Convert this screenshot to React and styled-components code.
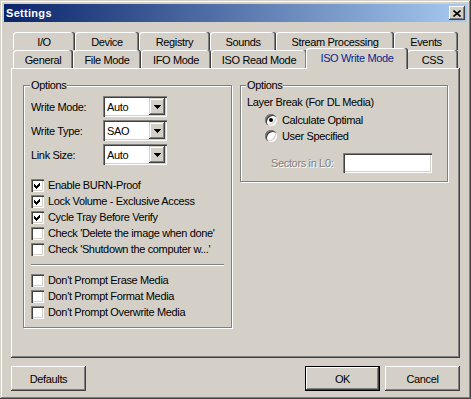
import React from "react";
import styled, { createGlobalStyle } from "styled-components";

const GlobalStyle = createGlobalStyle`
  html, body {
    margin: 0;
    padding: 0;
    background: #d4d0c8;
  }
  body {
    font-family: "Liberation Sans", Arial, sans-serif;
    font-size: 11px;
    letter-spacing: -0.35px;
    color: #000;
  }
`;

const raised = `
  box-shadow: inset -1px -1px #404040, inset 1px 1px #fff,
    inset -2px -2px #808080, inset 2px 2px #d4d0c8;
`;

const sunken = `
  box-shadow: inset 1px 1px #808080, inset 2px 2px #404040,
    inset -1px -1px #fff, inset -2px -2px #d4d0c8;
`;

const Window = styled.div`
  width: 471px;
  height: 399px;
  box-sizing: border-box;
  padding: 4px;
  background: #d4d0c8;
  box-shadow: inset -1px -1px #404040, inset 1px 1px #d4d0c8,
    inset -2px -2px #808080, inset 2px 2px #fff;
  display: flex;
  flex-direction: column;
`;

const TitleBar = styled.div`
  height: 18px;
  display: flex;
  align-items: center;
  padding: 0 2px;
  background: linear-gradient(to right, #0a246a, #a6caf0);
  color: #fff;
  font-weight: bold;
  letter-spacing: 0.3px;
`;

const CloseButton = styled.div`
  margin-left: auto;
  width: 16px;
  height: 14px;
  background: #d4d0c8;
  display: flex;
  align-items: center;
  justify-content: center;
  ${raised}
`;

const Body = styled.div`
  margin: 10px 7px 0;
  display: flex;
  flex-direction: column;
`;

const TabRow = styled.div`
  display: flex;
  align-items: flex-end;
  height: 18px;
  padding-left: 2px;
`;

const Tab = styled.div`
  position: relative;
  box-sizing: border-box;
  width: ${(p) => (p.$active ? p.$w + 2 : p.$w)}px;
  height: ${(p) => (p.$active ? 21 : 18)}px;
  margin: ${(p) => (p.$active ? "0 -1px -1px" : "0")};
  padding-top: 4px;
  line-height: 13px;
  text-align: center;
  white-space: nowrap;
  background: #d4d0c8;
  color: ${(p) => (p.$active ? "#0a1f8f" : "#000")};
  z-index: ${(p) => (p.$active ? 2 : 1)};
  border-radius: 3px 3px 0 0;
  box-shadow: inset -1px 0 #404040, inset -2px 0 #808080, inset 1px 1px #fff;
`;

const Panel = styled.div`
  height: 290px;
  box-sizing: border-box;
  padding: 11px 12px 0;
  display: flex;
  align-items: flex-start;
  gap: 8px;
  box-shadow: inset -1px -1px #404040, inset 1px 1px #fff,
    inset -2px -2px #808080;
`;

const Group = styled.fieldset`
  box-sizing: border-box;
  width: ${(p) => p.$w}px;
  min-width: 0;
  margin: 0;
  padding: 4px 7px ${(p) => p.$pb}px ${(p) => p.$pl}px;
  border: 1px solid #808080;
  box-shadow: inset 1px 1px #fff, 1px 1px #fff;
`;

const Legend = styled.legend`
  margin-left: -1px;
  padding: 0 1px;
  line-height: 13px;
  background: #d4d0c8;
`;

const FieldRows = styled.div`
  display: flex;
  flex-direction: column;
  gap: 3px;
`;

const FieldRow = styled.div`
  display: flex;
  align-items: center;
  height: 21px;
`;

const FieldLabel = styled.span`
  width: 72px;
  flex: none;
`;

const Combo = styled.div`
  width: 64px;
  height: 21px;
  box-sizing: border-box;
  background: #fff;
  display: flex;
  align-items: center;
  padding: 2px 2px 2px 4px;
  ${sunken}
`;

const ComboValue = styled.span`
  flex: 1;
`;

const DropButton = styled.div`
  width: 16px;
  height: 17px;
  background: #d4d0c8;
  display: flex;
  align-items: center;
  justify-content: center;
  box-shadow: inset -1px -1px #404040, inset 1px 1px #d4d0c8,
    inset -2px -2px #808080, inset 2px 2px #fff;
`;

const CheckList = styled.div`
  margin-top: ${(p) => p.$mt}px;
  display: flex;
  flex-direction: column;
`;

const CheckRow = styled.div`
  display: flex;
  align-items: center;
  height: 16px;
  gap: 4px;
  white-space: nowrap;
`;

const Box = styled.span`
  width: 13px;
  height: 13px;
  flex: none;
  box-sizing: border-box;
  background: #fff;
  display: flex;
  ${sunken}
`;

const Separator = styled.div`
  margin-top: 7px;
  height: 0;
  border-top: 1px solid #808080;
  border-bottom: 1px solid #fff;
`;

const PlainText = styled.div`
  line-height: 13px;
`;

const RadioList = styled.div`
  margin: 3px 0 0 18px;
  display: flex;
  flex-direction: column;
`;

const RadioRow = styled.div`
  display: flex;
  align-items: center;
  height: 16px;
  gap: 5px;
`;

const RadioCircle = styled.span`
  width: 12px;
  height: 12px;
  flex: none;
  border-radius: 50%;
  background: #fff;
  display: flex;
  align-items: center;
  justify-content: center;
  box-shadow: inset 1px 1px #808080, inset 2px 2px #404040,
    inset -1px -1px #fff, inset -2px -2px #d4d0c8;
`;

const RadioDot = styled.span`
  width: 4px;
  height: 4px;
  border-radius: 50%;
  background: #000;
`;

const SectorsRow = styled.div`
  margin: 9px 0 0 24px;
  display: flex;
  align-items: center;
`;

const DisabledLabel = styled.span`
  width: 72px;
  color: #808080;
  text-shadow: 1px 1px 0 #fff;
`;

const TextInput = styled.div`
  width: 89px;
  height: 20px;
  box-sizing: border-box;
  background: #fff;
  ${sunken}
`;

const Footer = styled.div`
  margin-top: 8px;
  display: flex;
  gap: 5px;
`;

const Button = styled.div`
  width: 75px;
  height: 25px;
  box-sizing: border-box;
  display: flex;
  align-items: center;
  justify-content: center;
  margin-left: ${(p) => (p.$push ? "auto" : "0")};
  background: #d4d0c8;
  ${(p) =>
    p.$default
      ? `box-shadow: inset 0 0 0 1px #000, inset -2px -2px #404040, inset 2px 2px #fff, inset -3px -3px #808080;`
      : raised}
`;

const topTabs = [
  ["I/O", 62],
  ["Device", 64],
  ["Registry", 71],
  ["Sounds", 66],
  ["Stream Processing", 118],
  ["Events", 64],
];

const bottomTabs = [
  ["General", 60],
  ["File Mode", 68],
  ["IFO Mode", 70],
  ["ISO Read Mode", 96],
  ["ISO Write Mode", 100, true],
  ["CSS", 51],
];

const combos = [
  ["Write Mode:", "Auto"],
  ["Write Type:", "SAO"],
  ["Link Size:", "Auto"],
];

const checks = [
  ["Enable BURN-Proof", true],
  ["Lock Volume - Exclusive Access", true],
  ["Cycle Tray Before Verify", true],
  ["Check 'Delete the image when done'", false],
  ["Check 'Shutdown the computer w...'", false],
];

const prompts = [
  "Don't Prompt Erase Media",
  "Don't Prompt Format Media",
  "Don't Prompt Overwrite Media",
];

const CheckMark = () => (
  <svg width="13" height="13" viewBox="0 0 13 13" shapeRendering="crispEdges">
    <polygon points="3,5 5,7 9,3 9,6 5,10 3,8" fill="#000" />
  </svg>
);

const Check = ({ label, checked }) => (
  <CheckRow>
    <Box>{checked && <CheckMark />}</Box>
    <span>{label}</span>
  </CheckRow>
);

const Radio = ({ label, checked }) => (
  <RadioRow>
    <RadioCircle>{checked && <RadioDot />}</RadioCircle>
    <span>{label}</span>
  </RadioRow>
);

export default function App() {
  return (
    <>
      <GlobalStyle />
      <Window>
        <TitleBar>
          <span>Settings</span>
          <CloseButton>
            <svg width="8" height="7" viewBox="0 0 8 7">
              <path d="M0.5 0.5 L7.5 6.5 M7.5 0.5 L0.5 6.5" stroke="#000" strokeWidth="1.6" />
            </svg>
          </CloseButton>
        </TitleBar>
        <Body>
          <TabRow>
            {topTabs.map(([t, w]) => (
              <Tab key={t} $w={w}>
                {t}
              </Tab>
            ))}
          </TabRow>
          <TabRow>
            {bottomTabs.map(([t, w, a]) => (
              <Tab key={t} $w={w} $active={a}>
                {t}
              </Tab>
            ))}
          </TabRow>
          <Panel>
            <Group $w={209} $pl={7} $pb={7}>
              <Legend>Options</Legend>
              <FieldRows>
                {combos.map(([l, v]) => (
                  <FieldRow key={l}>
                    <FieldLabel>{l}</FieldLabel>
                    <Combo>
                      <ComboValue>{v}</ComboValue>
                      <DropButton>
                        <svg width="7" height="4" viewBox="0 0 7 4" shapeRendering="crispEdges">
                          <polygon points="0,0 7,0 3.5,4" fill="#000" />
                        </svg>
                      </DropButton>
                    </Combo>
                  </FieldRow>
                ))}
              </FieldRows>
              <CheckList $mt={12}>
                {checks.map(([l, c]) => (
                  <Check key={l} label={l} checked={c} />
                ))}
              </CheckList>
              <Separator />
              <CheckList $mt={6}>
                {prompts.map((l) => (
                  <Check key={l} label={l} />
                ))}
              </CheckList>
            </Group>
            <Group $w={208} $pl={6} $pb={8}>
              <Legend>Options</Legend>
              <PlainText>Layer Break (For DL Media)</PlainText>
              <RadioList>
                <Radio label="Calculate Optimal" checked />
                <Radio label="User Specified" />
              </RadioList>
              <SectorsRow>
                <DisabledLabel>Sectors in L0:</DisabledLabel>
                <TextInput />
              </SectorsRow>
            </Group>
          </Panel>
          <Footer>
            <Button>Defaults</Button>
            <Button $push $default>
              OK
            </Button>
            <Button>Cancel</Button>
          </Footer>
        </Body>
      </Window>
    </>
  );
}
